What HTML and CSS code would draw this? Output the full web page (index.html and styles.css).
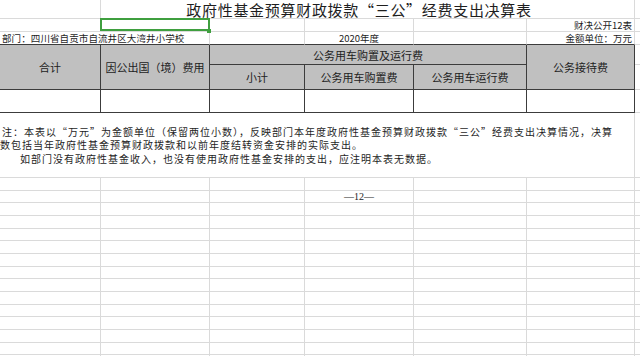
FILE: index.html
```html
<!DOCTYPE html>
<html lang="zh-CN">
<head>
<meta charset="utf-8">
<title>政府性基金预算财政拨款“三公”经费支出决算表</title>
<link rel="stylesheet" href="styles.css">
</head>
<body>
<div class="sheet">
  <!-- row 1 -->
  <div class="c"></div>
  <div class="c title">政府性基金预算财政拨款“三公”经费支出决算表</div>
  <div class="c x"></div>
  <!-- row 2 -->
  <div class="c"></div>
  <div class="c sel"></div>
  <div class="c"></div>
  <div class="c"></div>
  <div class="c"></div>
  <div class="c right">财决公开12表</div>
  <div class="c x"></div>
  <!-- row 3 -->
  <div class="c hb dept">部门：四川省自贡市自流井区大湾井小学校</div>
  <div class="c hb"></div>
  <div class="c hb center">2020年度</div>
  <div class="c hb"></div>
  <div class="c hb right">金额单位：万元</div>
  <div class="c x"></div>
  <!-- header rows -->
  <div class="c h h2">合计</div>
  <div class="c h h2">因公出国（境）费用</div>
  <div class="c h h3">公务用车购置及运行费</div>
  <div class="c h h2">公务接待费</div>
  <div class="c x"></div>
  <div class="c h">小计</div>
  <div class="c h">公务用车购置费</div>
  <div class="c h">公务用车运行费</div>
  <div class="c x"></div>
  <!-- data row -->
  <div class="c d"></div>
  <div class="c d"></div>
  <div class="c d"></div>
  <div class="c d"></div>
  <div class="c d"></div>
  <div class="c d"></div>
  <div class="c x"></div>
  <!-- note -->
  <div class="c note">
    <div class="line first">注：本表以“万元”为金额单位（保留两位小数），反映部门本年度政府性基金预算财政拨款“三公”经费支出决算情况，决算</div>
    <div class="line">数包括当年政府性基金预算财政拨款和以前年度结转资金安排的实际支出。</div>
    <div class="line indent">如部门没有政府性基金收入，也没有使用政府性基金安排的支出，应注明本表无数据。</div>
  </div>
  <div class="c x"></div>
  <!-- empty grid -->
  <div class="fill"></div>
  <div class="fill"></div>
  <div class="fill"></div>
  <div class="fill"><div class="pg">—12—</div></div>
  <div class="fill"></div>
  <div class="fill"></div>
  <div class="fill x"></div>
</div>
</body>
</html>
```

FILE: styles.css
```css
html, body {
  margin: 0;
  padding: 0;
  background: #ffffff;
}

body {
  font-family: "Noto Sans CJK SC", "Noto Sans", sans-serif;
  color: #1e1e1e;
  overflow: hidden;
}

.sheet {
  display: grid;
  width: 640px;
  height: 356px;
  grid-template-columns: 101px 109px 95px 109px 113px 108px 1fr;
  grid-template-rows: 19px 13px 13px 20px 25px 23px 65px 1fr;
  overflow: hidden;
}

.c {
  box-sizing: border-box;
  border-right: 1px solid #dadada;
  border-bottom: 1px solid #dadada;
  display: flex;
  align-items: center;
  font-size: 9.5px;
  line-height: 12px;
  white-space: nowrap;
  min-width: 0;
}

.x {
  border-right: none;
}

.title {
  grid-column: span 5;
  justify-content: center;
  padding-right: 17px;
  font-size: 15px;
  letter-spacing: 0.7px;
  line-height: 17px;
}

.right {
  justify-content: flex-end;
  padding-right: 2px;
}

.center {
  justify-content: center;
}

.dept {
  grid-column: span 2;
  padding-left: 2px;
  letter-spacing: 0.1px;
}

.hb {
  border-bottom-color: #3c3c3c;
}

.h {
  background: #c0c0c0;
  border-right-color: #3c3c3c;
  border-bottom-color: #3c3c3c;
  justify-content: center;
  font-size: 11px;
  color: #222;
}

.h2 {
  grid-row: span 2;
}

.h3 {
  grid-column: span 3;
}

.d {
  border-right-color: #3c3c3c;
  border-bottom-color: #3c3c3c;
}

.note {
  grid-column: span 6;
  flex-direction: column;
  justify-content: center;
  align-items: flex-start;
  font-size: 10px;
  letter-spacing: 1px;
  line-height: 13.5px;
}

.line {
  white-space: nowrap;
}

.first {
  padding-left: 2px;
}

.indent {
  padding-left: 20px;
}

.sel {
  position: relative;
}

.sel::before {
  content: "";
  position: absolute;
  left: -1px;
  top: -1px;
  right: -1px;
  bottom: 0;
  border: 2px solid #3f9f3f;
}

.sel::after {
  content: "";
  position: absolute;
  right: -2px;
  bottom: -2px;
  width: 4px;
  height: 4px;
  background: #3f9f3f;
}

.fill {
  box-sizing: border-box;
  border-right: 1px solid #dadada;
  background: repeating-linear-gradient(to bottom,
    transparent 0,
    transparent 11.67px,
    #dadada 11.67px,
    #dadada 12.67px);
}

.fill.x {
  border-right: none;
}

.pg {
  margin-top: 12.67px;
  height: 12.67px;
  line-height: 12.67px;
  text-align: center;
  font-family: "Liberation Serif", "Noto Sans CJK SC", serif;
  font-size: 10px;
}
```
